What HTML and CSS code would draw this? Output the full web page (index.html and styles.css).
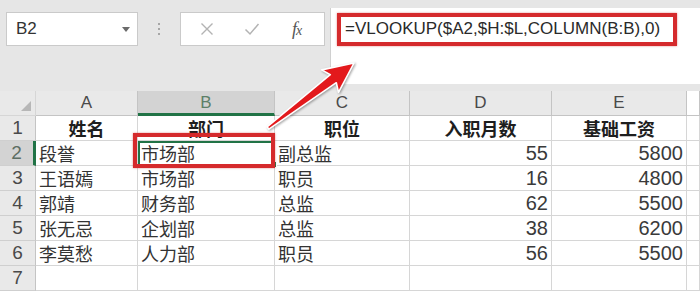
FILE: index.html
```html
<!DOCTYPE html>
<html lang="zh-CN">
<head>
<meta charset="utf-8">
<title>VLOOKUP</title>
<link rel="stylesheet" href="styles.css">
</head>
<body>
<div class="page">
  <div class="toolbar">
    <div class="namebox"><span class="ref">B2</span><span class="caret"></span></div>
    <div class="grip"><i></i><i></i><i></i></div>
    <div class="fbtns">
      <span class="slot"><svg width="14" height="14" viewBox="0 0 14 14"><path d="M1.5 1.5 L12.5 12.5 M12.5 1.5 L1.5 12.5" stroke="#b3b3b3" stroke-width="1.4" fill="none"/></svg></span>
      <span class="slot"><svg width="16" height="14" viewBox="0 0 16 14"><path d="M1.5 7.5 L6 12 L14.5 2" stroke="#b3b3b3" stroke-width="1.5" fill="none"/></svg></span>
      <span class="slot fx">f<span class="x">x</span></span>
    </div>
    <div class="formula"><span class="fbox">=VLOOKUP($A2,$H:$L,COLUMN(B:B),0)</span></div>
  </div>

  <div class="sheet">
    <div class="hd corner"><span class="tri"></span></div>
    <div class="hd col">A</div>
    <div class="hd col sel">B</div>
    <div class="hd col">C</div>
    <div class="hd col">D</div>
    <div class="hd col">E</div>
    <div class="hd col rest"></div>

    <div class="hd row">1</div>
    <div class="c th">姓名</div>
    <div class="c th">部门</div>
    <div class="c th">职位</div>
    <div class="c th">入职月数</div>
    <div class="c th">基础工资</div>
    <div class="c rest"></div>

    <div class="hd row rsel">2</div>
    <div class="c">段誉</div>
    <div class="c active">市场部<span class="mark"></span></div>
    <div class="c">副总监</div>
    <div class="c num">55</div>
    <div class="c num">5800</div>
    <div class="c rest"></div>

    <div class="hd row">3</div>
    <div class="c">王语嫣</div>
    <div class="c">市场部</div>
    <div class="c">职员</div>
    <div class="c num">16</div>
    <div class="c num">4800</div>
    <div class="c rest"></div>

    <div class="hd row">4</div>
    <div class="c">郭靖</div>
    <div class="c">财务部</div>
    <div class="c">总监</div>
    <div class="c num">62</div>
    <div class="c num">5500</div>
    <div class="c rest"></div>

    <div class="hd row">5</div>
    <div class="c">张无忌</div>
    <div class="c">企划部</div>
    <div class="c">总监</div>
    <div class="c num">38</div>
    <div class="c num">6200</div>
    <div class="c rest"></div>

    <div class="hd row">6</div>
    <div class="c">李莫愁</div>
    <div class="c">人力部</div>
    <div class="c">职员</div>
    <div class="c num">56</div>
    <div class="c num">5500</div>
    <div class="c rest"></div>

    <div class="hd row">7</div>
    <div class="c"></div>
    <div class="c"></div>
    <div class="c"></div>
    <div class="c"></div>
    <div class="c"></div>
    <div class="c rest"></div>
  </div>

  <svg class="arrow" width="700" height="293" viewBox="0 0 700 293">
    <polygon points="267.1,126.8 330.3,74.7 321.7,69.9 354,63 338.5,92.3 336.3,82.7 268.9,129.2" fill="#e3191c" stroke="#ffffff" stroke-width="1.6" stroke-linejoin="round"/>
  </svg>
</div>
</body>
</html>
```

FILE: styles.css
```css
html, body {
  margin: 0;
  padding: 0;
  background: #ffffff;
}

.page {
  position: relative;
  width: 700px;
  height: 293px;
  overflow: hidden;
  font-family: "Liberation Sans", "Noto Sans CJK SC", sans-serif;
  color: #333;
}

.toolbar {
  display: flex;
  align-items: flex-start;
  height: 91px;
  background: #e6e6e6;
}

.namebox {
  box-sizing: border-box;
  margin: 12px 0 0 6px;
  width: 132px;
  height: 34px;
  background: #fff;
  border: 1px solid #cacaca;
  display: flex;
  align-items: center;
  justify-content: space-between;
  padding: 0 7px 0 9px;
}

.ref {
  font-size: 17px;
  color: #333;
}

.caret {
  width: 0;
  height: 0;
  border-left: 4px solid transparent;
  border-right: 4px solid transparent;
  border-top: 5px solid #6b6b6b;
}

.grip {
  margin-top: 12px;
  width: 42px;
  height: 34px;
  display: flex;
  flex-direction: column;
  align-items: center;
  justify-content: center;
  gap: 3px;
}

.grip i {
  display: block;
  width: 2px;
  height: 2px;
  background: #a6a6a6;
}

.fbtns {
  box-sizing: border-box;
  margin-top: 12px;
  width: 145px;
  height: 34px;
  background: #fff;
  border: 1px solid #cacaca;
  display: flex;
  align-items: center;
  padding-left: 3px;
}

.slot {
  width: 45px;
  display: flex;
  justify-content: center;
  align-items: center;
}

.fx {
  font-family: "Liberation Serif", "DejaVu Serif", serif;
  font-style: italic;
  font-size: 18px;
  color: #555;
  letter-spacing: -1px;
}

.fx .x {
  font-size: 14px;
  position: relative;
  top: 2px;
}

.formula {
  box-sizing: border-box;
  margin: 8px 0 0 5px;
  flex: 1;
  height: 76px;
  background: #fff;
  border-left: 1px solid #d0d0d0;
  padding: 5px 0 0 6px;
}

.fbox {
  display: block;
  box-sizing: border-box;
  width: 340px;
  height: 33px;
  border: 4px solid #d52a2c;
  box-shadow: 0 0 2px rgba(200, 30, 30, 0.5);
  padding-left: 4px;
  font-size: 17px;
  line-height: 24px;
  color: #2a2a2a;
  white-space: nowrap;
}

.sheet {
  display: grid;
  grid-template-columns: 36px 102px 137px 135px 142px 135px 13px;
  grid-auto-rows: 25px;
}

.sheet > div {
  box-sizing: border-box;
  border-right: 1px solid #d6d6d6;
  border-bottom: 1px solid #d6d6d6;
  white-space: nowrap;
  line-height: 24px;
}

.hd {
  background: #e9e9e9;
  color: #4a4a4a;
  text-align: center;
}

.hd.col {
  font-size: 17px;
  border-right-color: #c4c4c4;
  border-bottom-color: #c4c4c4;
}

.hd.row {
  font-size: 19px;
  border-right-color: #c4c4c4;
  border-bottom-color: #cfcfcf;
}

.hd.sel {
  background: #d3d3d3;
  color: #5d8068;
  border-bottom: 3px solid #217346;
}

.hd.rsel {
  background: #d3d3d3;
  color: #5d6e63;
  border-right: 3px solid #217346;
}

.corner {
  position: relative;
}

.tri {
  position: absolute;
  right: 4px;
  bottom: 4px;
  width: 0;
  height: 0;
  border-left: 10px solid transparent;
  border-bottom: 10px solid #b7b7b7;
}

.hd.rest,
.c.rest {
  background: #fff;
}

.c {
  font-family: "Noto Sans CJK SC", "Liberation Sans", sans-serif;
  font-size: 18px;
  color: #333;
  padding-left: 3px;
}

.c.th {
  font-weight: bold;
  text-align: center;
  color: #1e1e1e;
  padding-left: 0;
}

.c.num {
  font-family: "Liberation Sans", sans-serif;
  font-size: 20px;
  text-align: right;
  padding-left: 0;
  padding-right: 3px;
  color: #3a3a3a;
}

.c.active {
  position: relative;
  border: 2px solid #217346;
  padding-left: 1px;
  line-height: 21px;
}

.c.active::after {
  content: "";
  position: absolute;
  right: -4px;
  bottom: -4px;
  width: 5px;
  height: 5px;
  background: #217346;
  border: 1px solid #fff;
}

.mark {
  position: absolute;
  left: -7px;
  top: -10px;
  width: 142px;
  height: 35px;
  box-sizing: border-box;
  border: 4px solid #d52a2c;
  box-shadow: 0 0 2px rgba(200, 30, 30, 0.5);
  z-index: 2;
}

.arrow {
  position: absolute;
  left: 0;
  top: 0;
  pointer-events: none;
  filter: drop-shadow(1px 1px 1px rgba(0, 0, 0, 0.35));
}
```
